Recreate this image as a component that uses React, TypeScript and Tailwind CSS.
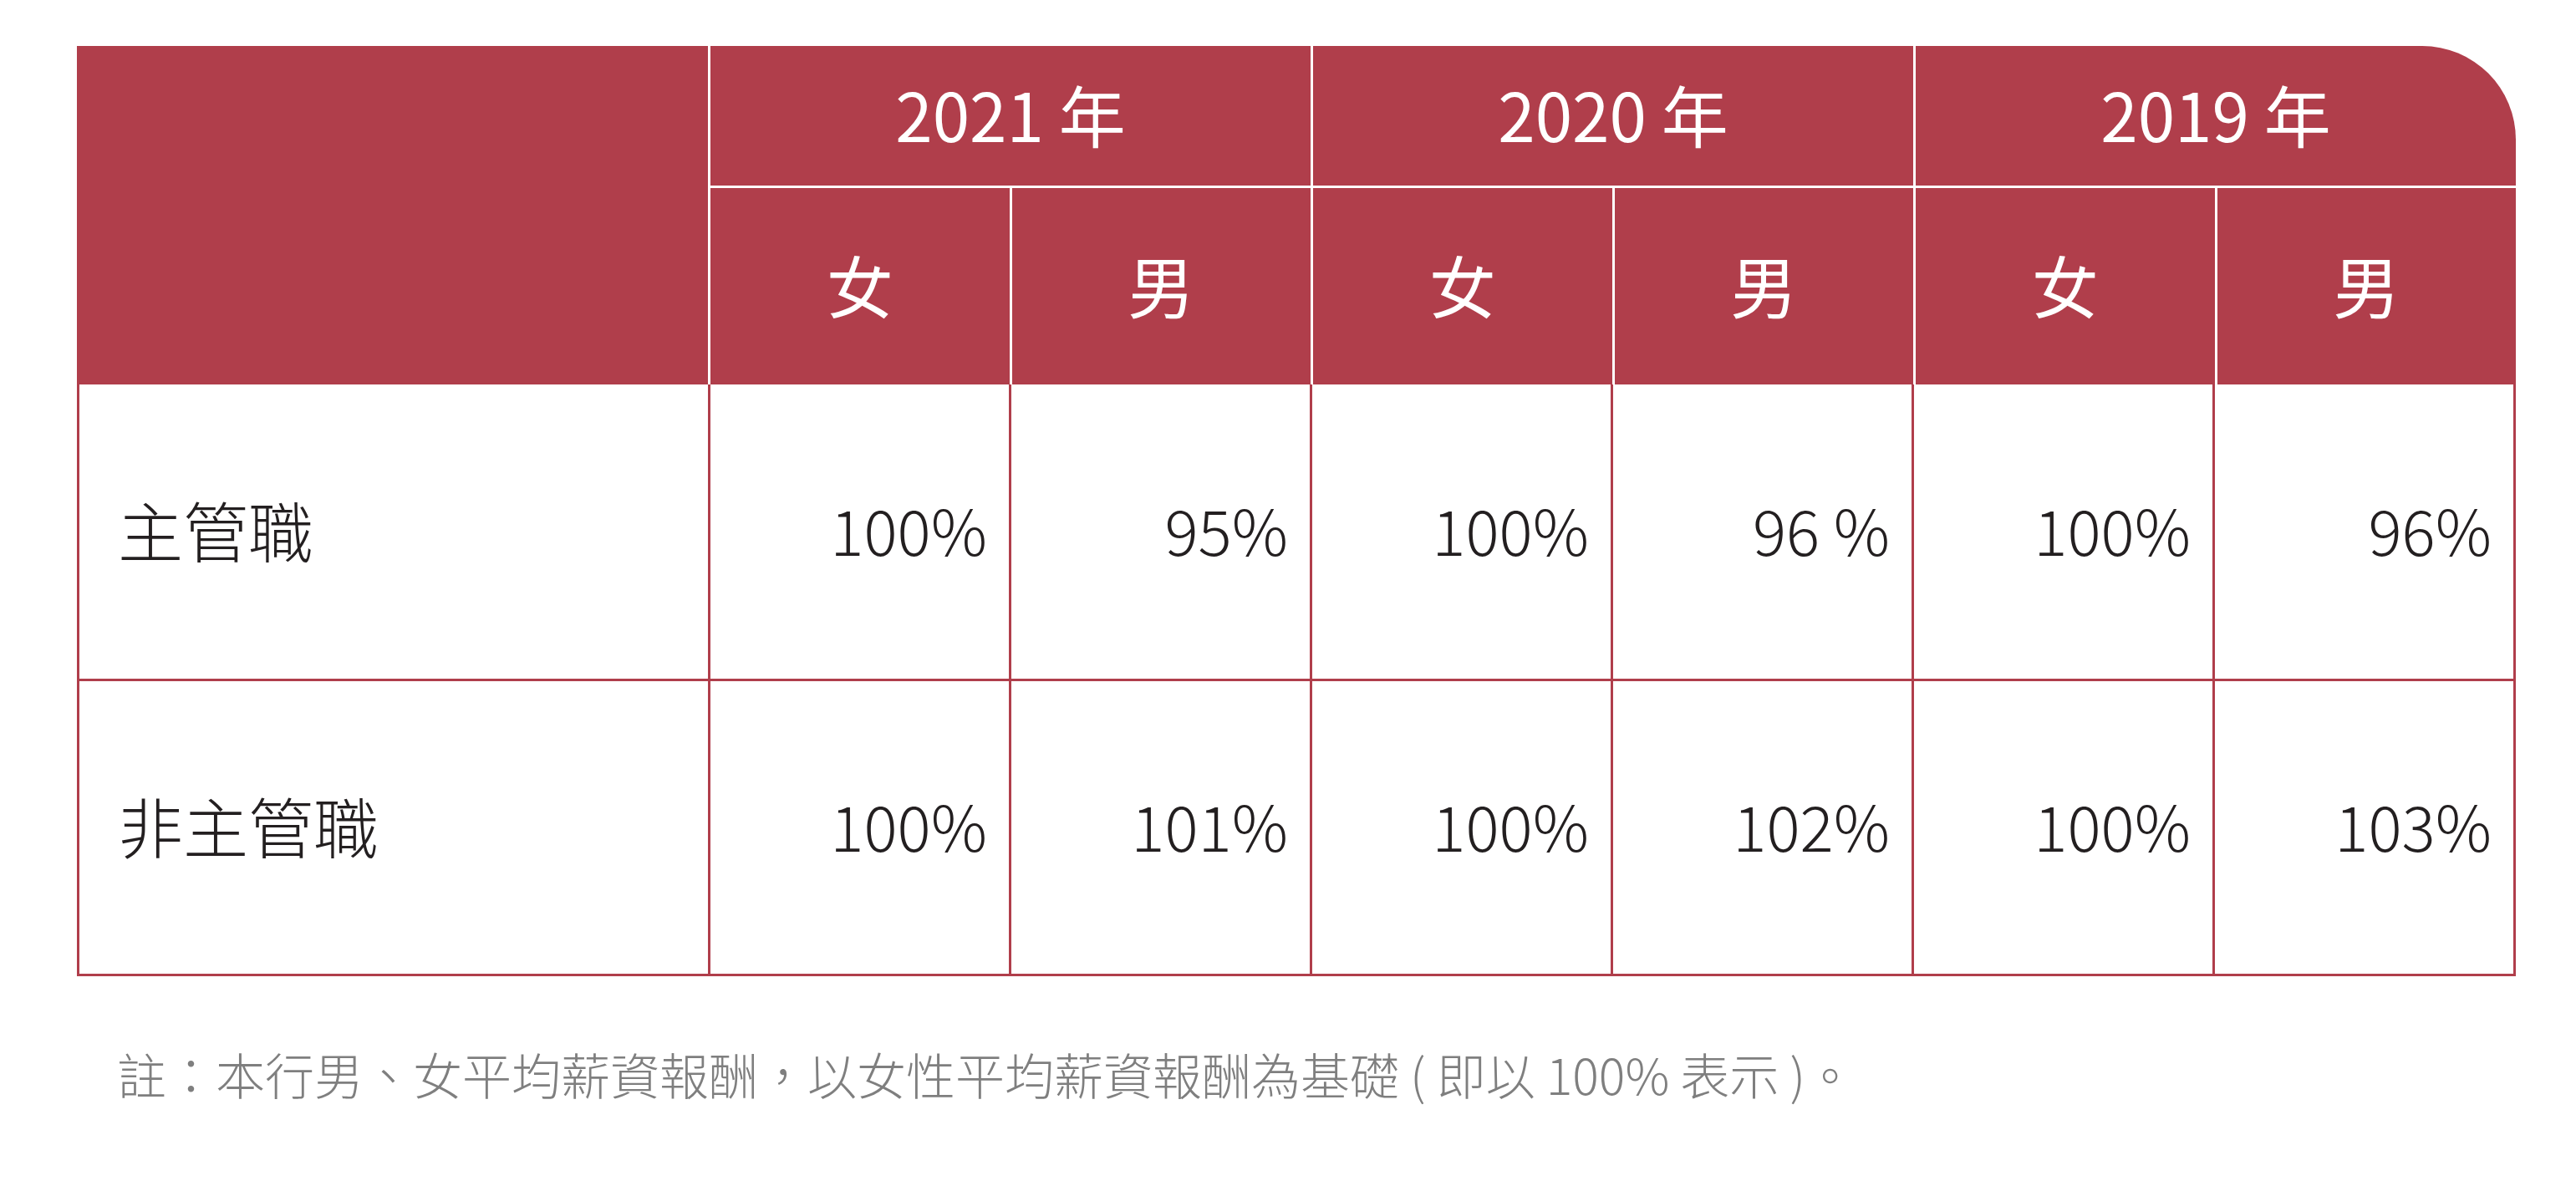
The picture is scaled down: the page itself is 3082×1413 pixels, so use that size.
const years = ['2021', '2020', '2019']

const rows = [
  { label: '主管職', values: ['100%', '95%', '100%', '96 %', '100%', '96%'] },
  { label: '非主管職', values: ['100%', '101%', '100%', '102%', '100%', '103%'] },
]

const font = "font-['Noto_Sans_CJK_TC','Noto_Sans_CJK_SC',sans-serif]"

export default function App() {
  return (
    <div className={`min-h-[1413px] bg-white pl-[92px] pt-[55px] ${font}`}>
      <div className="w-[2918px]">
        {/* header */}
        <div className="grid grid-cols-[755px_repeat(6,minmax(0,1fr))] grid-rows-[167px_235px] gap-[3px] bg-white rounded-tr-[112px] overflow-hidden">
          <div className="row-span-2 bg-[#b03e4b]" />
          {years.map((y) => (
            <div
              key={y}
              className="col-span-2 flex items-center justify-center bg-[#b03e4b] pb-[8px] text-[80px] leading-none text-white"
            >
              {y} 年
            </div>
          ))}
          {years.map((y) => (
            <>
              <div key={y + 'f'} className="flex items-center justify-center bg-[#b03e4b] pb-[8px] text-[80px] leading-none text-white">
                女
              </div>
              <div key={y + 'm'} className="flex items-center justify-center bg-[#b03e4b] pb-[8px] text-[80px] leading-none text-white">
                男
              </div>
            </>
          ))}
        </div>

        {/* body */}
        <div className="grid grid-cols-[752px_repeat(6,minmax(0,1fr))] grid-rows-[352px_350px] gap-[3px] bg-[#b03e4b] px-[3px] pb-[3px]">
          {rows.map((r) => (
            <>
              <div key={r.label} className="flex items-center bg-white pb-[6px] pl-[46px] text-[78px] font-light leading-none text-[#231f20]">
                {r.label}
              </div>
              {r.values.map((v, i) => (
                <div
                  key={r.label + i}
                  className="flex items-center justify-end bg-white pb-[8px] pr-[26px] text-[75px] font-light leading-none text-[#231f20]"
                >
                  {v}
                </div>
              ))}
            </>
          ))}
        </div>
      </div>

      <p className="mt-[87px] pl-[48px] text-[59px] font-light leading-none text-[#7f7f7f]">
        註：本行男、女平均薪資報酬，以女性平均薪資報酬為基礎 ( 即以 100% 表示 )。
      </p>
    </div>
  )
}
